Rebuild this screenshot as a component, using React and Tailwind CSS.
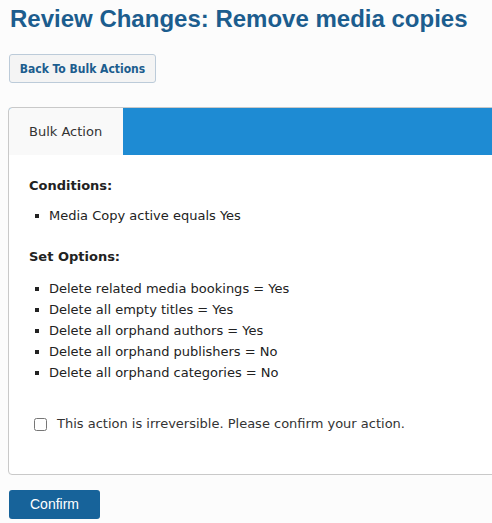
import React, { useState } from 'react';

const conditions = ['Media Copy active equals Yes'];

const options = [
    'Delete related media bookings = Yes',
    'Delete all empty titles = Yes',
    'Delete all orphand authors = Yes',
    'Delete all orphand publishers = No',
    'Delete all orphand categories = No',
];

function Bullets({ items }) {
    return (
        <ul className="pl-[6px]">
            {items.map((item) => (
                <li key={item} className="flex items-center leading-[21px]">
                    <span className="w-[4px] h-[4px] bg-[#222] mr-[10px] shrink-0"></span>
                    {item}
                </li>
            ))}
        </ul>
    );
}

export default function App() {
    const [confirmed, setConfirmed] = useState(false);

    return (
        <div className="min-h-screen bg-[#fcfcfc] overflow-hidden pl-[8px] pb-[10px] font-['DejaVu_Sans',Verdana,sans-serif] text-[13px] text-[#222]">
            <h1 className="pt-[5px] pl-[2px] text-[24px] leading-[28px] font-bold text-[#1c5d8e] font-['Liberation_Sans',Arial,sans-serif]">
                Review Changes: Remove media copies
            </h1>

            <button className="mt-[21px] ml-[1px] w-[147px] h-[29px] rounded-[3px] border border-[#bccbd9] bg-[#f4f4f4] text-[12px] font-bold text-[#1c5d8e] font-['DejaVu_Sans_Condensed',Tahoma,sans-serif]">
                Back To Bulk Actions
            </button>

            {/* Bulk action card */}
            <div className="mt-[24px] w-[520px] rounded-[4px] border border-[#c9c9c9] bg-white overflow-hidden">
                <div className="flex h-[47px] bg-[#1e8bd3]">
                    <div className="w-[114px] bg-[#f9f9f9] flex items-center pl-[20px] text-[13px] text-[#333]">
                        Bulk Action
                    </div>
                </div>

                <div className="pl-[20px] pt-[22px] pb-[41px]">
                    <div className="font-bold leading-[18px]">Conditions:</div>
                    <div className="mt-[10px]">
                        <Bullets items={conditions} />
                    </div>

                    <div className="mt-[22px] font-bold leading-[18px]">Set Options:</div>
                    <div className="mt-[12px]">
                        <Bullets items={options} />
                    </div>

                    <label className="mt-[32px] flex items-center leading-[18px] text-[#333]">
                        <input
                            type="checkbox"
                            checked={confirmed}
                            onChange={() => setConfirmed(!confirmed)}
                            className="ml-[5px] w-[13px] h-[13px] mr-[10px]"
                        />
                        This action is irreversible. Please confirm your action.
                    </label>
                </div>
            </div>

            <button className="mt-[15px] ml-[1px] block w-[91px] h-[29px] rounded-[3px] bg-[#17639a] text-white text-[14px] font-['Liberation_Sans',Arial,sans-serif]">
                Confirm
            </button>
        </div>
    );
}
